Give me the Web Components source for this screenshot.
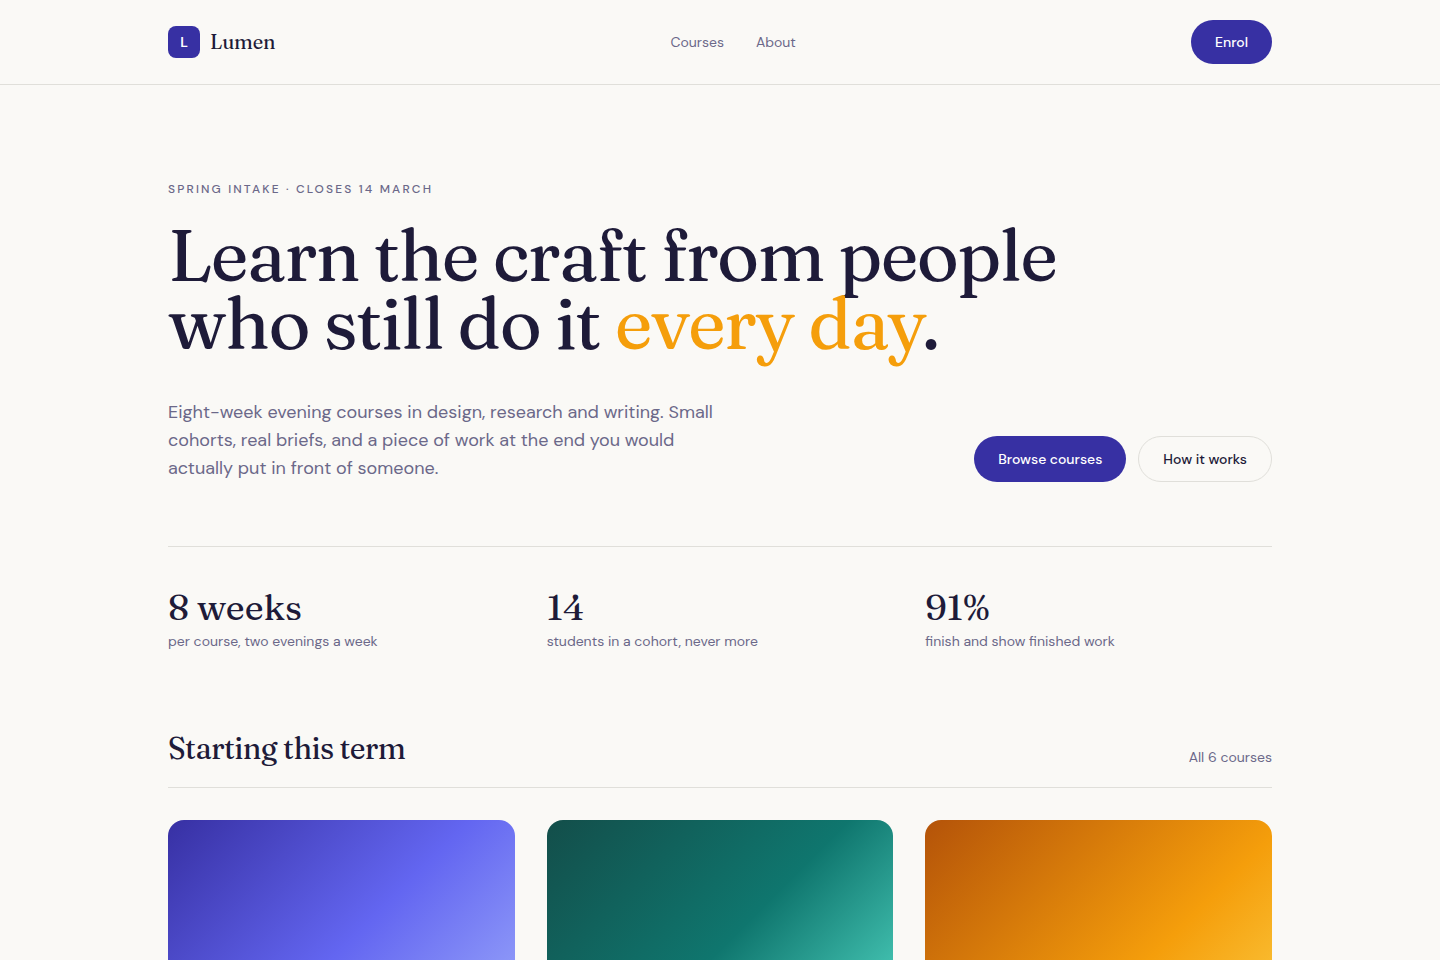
<!DOCTYPE html>
<html lang="en">
<head>
<meta charset="utf-8">
<meta name="viewport" content="width=device-width, initial-scale=1">
<title>Lumen</title>
<style>
  :root {
    --paper: #faf9f6;
    --ink: #1e1b39;
    --muted: #6b6889;
    --line: #e0dfda;
    --brand: #3730a3;
    --accent: #f59e0b;
    --serif: Fraunces, "Noto Serif", "Liberation Serif", serif;
    --sans: "DM Sans", "Open Sans", "Liberation Sans", sans-serif;
  }
  body {
    margin: 0;
    background: var(--paper);
    color: var(--ink);
    font: 400 14px/20px var(--sans);
  }
</style>
</head>
<body>
<lumen-page></lumen-page>

<template id="page">
  <style>
    :host { display: block; }
    main { display: block; }
    .stats, .cards { display: grid; grid-template-columns: repeat(3, minmax(0, 1fr)); gap: 32px; }
    .stats { padding: 40px 0 80px; border-top: 1px solid var(--line); }
    .cards { padding: 32px 0 96px; }
  </style>
  <lumen-header></lumen-header>
  <main>
    <lumen-wrap>
      <lumen-hero></lumen-hero>
      <div class="stats">
        <lumen-stat value="8 weeks">per course, two evenings a week</lumen-stat>
        <lumen-stat value="14">students in a cohort, never more</lumen-stat>
        <lumen-stat value="91%">finish and show finished work</lumen-stat>
      </div>
      <lumen-section-head>
        Starting this term
        <lumen-link slot="link" href="#all">All 6 courses</lumen-link>
      </lumen-section-head>
      <div class="cards">
        <lumen-cover tone="indigo"></lumen-cover>
        <lumen-cover tone="teal"></lumen-cover>
        <lumen-cover tone="amber"></lumen-cover>
      </div>
    </lumen-wrap>
  </main>
</template>

<template id="wrap">
  <style>
    :host { display: block; box-sizing: border-box; max-width: 1200px; margin: 0 auto; padding: 0 48px; }
  </style>
  <slot></slot>
</template>

<template id="header">
  <style>
    :host { display: block; border-bottom: 1px solid var(--line); }
    .bar { display: flex; align-items: center; justify-content: space-between; padding: 20px 0; }
    .brand { display: flex; align-items: center; gap: 10px; color: inherit; text-decoration: none; }
    .mark {
      display: grid; place-items: center; width: 32px; height: 32px; border-radius: 8px;
      background: var(--brand); color: #fff; font-weight: 600;
    }
    .name { font: 400 20px/28px var(--serif); letter-spacing: -0.01em; }
    nav { display: flex; gap: 32px; }
  </style>
  <header>
    <lumen-wrap>
      <div class="bar">
        <a class="brand" href="#"><span class="mark">L</span><span class="name">Lumen</span></a>
        <nav>
          <lumen-link href="#courses">Courses</lumen-link>
          <lumen-link href="#about">About</lumen-link>
        </nav>
        <lumen-button>Enrol</lumen-button>
      </div>
    </lumen-wrap>
  </header>
</template>

<template id="link">
  <style>
    :host { display: block; }
    a { display: block; color: var(--muted); text-decoration: none; }
    a:hover { color: var(--ink); }
  </style>
  <a><slot></slot></a>
</template>

<template id="button">
  <style>
    :host { display: flex; }
    button {
      flex: 1; padding: 12px 24px; border: 0; border-radius: 999px; cursor: pointer;
      background: var(--brand); color: #fff; font: 500 14px/20px var(--sans); white-space: nowrap;
    }
    :host([outline]) button { background: transparent; color: var(--ink); border: 1px solid var(--line); }
  </style>
  <button type="button"><slot></slot></button>
</template>

<template id="hero">
  <style>
    :host { display: block; padding: 96px 0 64px; }
    .eyebrow { margin: 0 0 24px; font-size: 12px; line-height: 16px; font-weight: 500; letter-spacing: 0.18em; text-transform: uppercase; color: var(--muted); }
    h1 { margin: 0 0 40px; max-width: 960px; font: 400 72px/0.95 var(--serif); letter-spacing: -0.022em; }
    em { font-style: normal; color: var(--accent); }
    .row { display: flex; align-items: flex-end; justify-content: space-between; gap: 48px; }
    .lead { margin: 0; max-width: 560px; font-size: 18px; line-height: 28px; color: var(--muted); }
    .actions { display: flex; gap: 12px; }
  </style>
  <p class="eyebrow">Spring intake · closes 14 March</p>
  <h1>Learn the craft from people who still do it <em>every day</em>.</h1>
  <div class="row">
    <p class="lead">Eight-week evening courses in design, research and writing. Small cohorts, real briefs, and a piece of work at the end you would actually put in front of someone.</p>
    <div class="actions">
      <lumen-button>Browse courses</lumen-button>
      <lumen-button outline>How it works</lumen-button>
    </div>
  </div>
</template>

<template id="stat">
  <style>
    :host { display: block; }
    .value { font: 400 36px/40px var(--serif); }
    .label { margin-top: 4px; color: var(--muted); }
  </style>
  <div class="value"></div>
  <div class="label"><slot></slot></div>
</template>

<template id="section-head">
  <style>
    :host { display: flex; align-items: flex-end; justify-content: space-between; padding-bottom: 20px; border-bottom: 1px solid var(--line); }
    h2 { margin: 0; font: 400 30px/36px var(--serif); letter-spacing: -0.022em; }
  </style>
  <h2><slot></slot></h2>
  <slot name="link"></slot>
</template>

<template id="cover">
  <style>
    :host { display: block; aspect-ratio: 4 / 3; border-radius: 16px; }
    :host([tone="indigo"]) { background: linear-gradient(135deg, #3730a3 0%, #6366f1 50%, #a5b4fc 100%); }
    :host([tone="teal"]) { background: linear-gradient(135deg, #134e4a 0%, #0f766e 50%, #5eead4 100%); }
    :host([tone="amber"]) { background: linear-gradient(135deg, #b45309 0%, #f59e0b 60%, #fcd34d 100%); }
  </style>
</template>

<script>
  class LumenElement extends HTMLElement {
    constructor() {
      super();
      const template = document.getElementById(this.localName.replace('lumen-', ''));
      this.attachShadow({ mode: 'open' }).append(template.content.cloneNode(true));
    }
  }
  class LumenPage extends LumenElement {}
  class LumenWrap extends LumenElement {}
  class LumenHeader extends LumenElement {}
  class LumenButton extends LumenElement {}
  class LumenHero extends LumenElement {}
  class LumenSectionHead extends LumenElement {}
  class LumenCover extends LumenElement {}
  class LumenLink extends LumenElement {
    connectedCallback() {
      this.shadowRoot.querySelector('a').href = this.getAttribute('href');
    }
  }
  class LumenStat extends LumenElement {
    connectedCallback() {
      this.shadowRoot.querySelector('.value').textContent = this.getAttribute('value');
    }
  }
  customElements.define('lumen-wrap', LumenWrap);
  customElements.define('lumen-link', LumenLink);
  customElements.define('lumen-button', LumenButton);
  customElements.define('lumen-stat', LumenStat);
  customElements.define('lumen-section-head', LumenSectionHead);
  customElements.define('lumen-cover', LumenCover);
  customElements.define('lumen-hero', LumenHero);
  customElements.define('lumen-header', LumenHeader);
  customElements.define('lumen-page', LumenPage);
</script>
</body>
</html>
